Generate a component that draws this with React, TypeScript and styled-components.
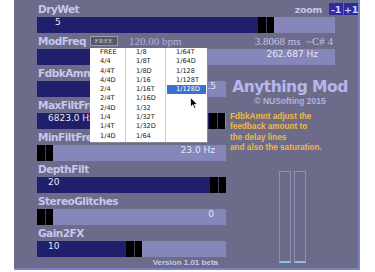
import styled, { createGlobalStyle } from 'styled-components';

const GlobalStyle = createGlobalStyle`
  html, body { margin: 0; padding: 0; background: #fff; }
  body { font-family: 'DejaVu Sans', Verdana, sans-serif; }
`;

const Panel = styled.div`
  position: relative;
  box-sizing: border-box;
  margin-left: 14px;
  width: 346px;
  height: 270px;
  padding: 1px 0 0 23px;
  background: #6c6b89;
  border-right: 2px solid #7b82cc;
  border-bottom: 2px solid #7b82cc;
  display: flex;
  flex-direction: column;
`;

const LabelLine = styled.div`
  height: 16px;
  display: flex;
  align-items: center;
`;

const Label = styled.span`
  font: bold 10.5px 'DejaVu Sans', Verdana, sans-serif;
  letter-spacing: -0.5px;
  color: #c6c6ee;
  padding-left: 1px;
`;

const ZoomBox = styled.div`
  margin-left: auto;
  display: flex;
  align-items: center;
  gap: 1px;
  font: bold 9.5px 'DejaVu Sans', sans-serif;
  letter-spacing: -0.3px;
  color: #c6c6ee;
`;

const ZoomButton = styled.span`
  display: inline-flex;
  align-items: center;
  justify-content: center;
  width: 14px;
  height: 12px;
  background: #2c2c9e;
  color: #d2d2ff;
  font-size: 9.5px;
  &:first-of-type { margin-left: 6px; }
`;

const FreeButton = styled.span`
  box-sizing: border-box;
  margin-left: 4px;
  width: 28px;
  height: 10px;
  display: inline-flex;
  align-items: center;
  justify-content: center;
  background: #575766;
  border: 1px solid #9a9aa8;
  font: 7px 'Liberation Serif', serif;
  letter-spacing: 0.3px;
  color: #c8c8d0;
`;

const Bpm = styled.span`
  margin-left: 11px;
  font: 11px 'Liberation Serif', serif;
  color: #b4b4dc;
`;

const NoteInfo = styled.span`
  margin-left: auto;
  padding-right: 25px;
  font: 11px 'Liberation Serif', serif;
  color: #c4c4ea;
  white-space: pre;
`;

const Track = styled.div<{ $w: number }>`
  position: relative;
  display: flex;
  width: ${(p) => p.$w}px;
  height: 16px;
  background: #8786ba;
`;

const Fill = styled.div`
  height: 100%;
  background: #1f1f6c;
`;

const Handle = styled.div`
  display: flex;
  gap: 1px;
  width: 16px;
  height: 100%;
  background: #44445a;
  span {
    flex: 1;
    background: #000;
  }
`;

const Value = styled.span<{ $right?: boolean; $inset: number }>`
  position: absolute;
  top: 0;
  ${(p) => (p.$right ? `right: ${p.$inset}px;` : `left: ${p.$inset}px;`)}
  line-height: 16px;
  font: 9px 'DejaVu Sans', sans-serif;
  color: #e6e6f6;
  white-space: nowrap;
`;

const Lower = styled.div`
  display: flex;
  flex: 1;
`;

const LeftCol = styled.div`
  width: 189px;
  display: flex;
  flex-direction: column;
`;

const Version = styled.div`
  text-align: right;
  padding: 1px 8px 0 0;
  font: bold 8px 'Liberation Sans', Arial, sans-serif;
  color: #c8c8e8;
`;

const RightCol = styled.div`
  flex: 1;
  margin-left: 4px;
  padding-top: 13px;
  display: flex;
  flex-direction: column;
`;

const TitleBlock = styled.div`
  width: 120px;
  text-align: center;
`;

const Title = styled.div`
  font: bold 15.5px 'DejaVu Sans', sans-serif;
  line-height: 18px;
  letter-spacing: -0.5px;
  color: #b6b6ee;
  white-space: nowrap;
`;

const Copyright = styled.div`
  font: bold 8.5px 'Liberation Sans', Arial, sans-serif;
  line-height: 11px;
  color: #b0b0e6;
`;

const Help = styled.div`
  margin-top: 5px;
  font: bold 8.2px 'Liberation Sans', Arial, sans-serif;
  line-height: 10.4px;
  color: #f0b848;
`;

const Meters = styled.div`
  margin: 17px 0 0 49px;
  display: flex;
  gap: 3px;
`;

const Meter = styled.div`
  box-sizing: border-box;
  width: 12px;
  height: 92px;
  border: 1px solid #8f8fb4;
  border-bottom: 2px solid #8cc0e4;
`;

const Menu = styled.div`
  position: absolute;
  left: 76px;
  top: 48px;
  width: 117px;
  height: 94px;
  background: #fff;
  display: grid;
  grid-template-columns: 36px 40px 41px;
  box-shadow: 1px 1px 0 #8a8a9a;
`;

const MenuCol = styled.div`
  border-right: 1px solid #cfcfcf;
  &:last-child {
    border-right: 0;
  }
`;

const MenuItem = styled.div<{ $active?: boolean }>`
  height: 9.3px;
  line-height: 9.3px;
  overflow: hidden;
  margin: 0 1px;
  padding-left: 9px;
  font: 6.6px 'DejaVu Sans', sans-serif;
  color: ${(p) => (p.$active ? '#fff' : '#1a1a1a')};
  background: ${(p) => (p.$active ? '#3a72d4' : 'transparent')};
`;

const Cursor = styled.svg`
  position: absolute;
  left: 176px;
  top: 97px;
`;

type Slider = {
  name: string;
  fill: number;
  value: string;
  right?: boolean;
  inset: number;
};

const lower: Slider[] = [
  { name: 'FdbkAmnt', fill: 70, value: '0.5', right: true, inset: 10 },
  { name: 'MaxFiltFreq', fill: 172, value: '6823.0 Hz', inset: 11 },
  { name: 'MinFiltFreq', fill: 0, value: '23.0 Hz', right: true, inset: 11 },
  { name: 'DepthFilt', fill: 173, value: '20', inset: 11 },
  { name: 'StereoGlitches', fill: 0, value: '0', right: true, inset: 12 },
  { name: 'Gain2FX', fill: 89, value: '10', inset: 11 },
];

const menuCols: string[][] = [
  ['FREE', '4/4', '4/4T', '4/4D', '2/4', '2/4T', '2/4D', '1/4', '1/4T', '1/4D'],
  ['1/8', '1/8T', '1/8D', '1/16', '1/16T', '1/16D', '1/32', '1/32T', '1/32D', '1/64'],
  ['1/64T', '1/64D', '1/128', '1/128T', '1/128D'],
];

const Bar = ({ s, width }: { s: Slider; width: number }) => (
  <Track $w={width}>
    <Fill style={{ width: s.fill }} />
    <Handle>
      <span />
      <span />
    </Handle>
    <Value $right={s.right} $inset={s.inset}>
      {s.value}
    </Value>
  </Track>
);

export default function App() {
  return (
    <>
      <GlobalStyle />
      <Panel>
        <LabelLine>
          <Label>DryWet</Label>
          <ZoomBox>
            zoom
            <ZoomButton>-1</ZoomButton>
            <ZoomButton>+1</ZoomButton>
          </ZoomBox>
        </LabelLine>
        <Bar s={{ name: 'DryWet', fill: 221, value: '5', inset: 18 }} width={298} />

        <LabelLine>
          <Label>ModFreq</Label>
          <FreeButton>FREE</FreeButton>
          <Bpm>120.00 bpm</Bpm>
          <NoteInfo>3.8068 ms  ~C# 4</NoteInfo>
        </LabelLine>
        <Bar
          s={{ name: 'ModFreq', fill: 140, value: '262.687 Hz', right: true, inset: 17 }}
          width={298}
        />

        <Lower>
          <LeftCol>
            {lower.map((s) => (
              <div key={s.name}>
                <LabelLine>
                  <Label>{s.name}</Label>
                </LabelLine>
                <Bar s={s} width={189} />
              </div>
            ))}
            <Version>Version 1.01 beta</Version>
          </LeftCol>
          <RightCol>
            <TitleBlock>
              <Title>Anything Mod</Title>
              <Copyright>© NUSofting 2015</Copyright>
            </TitleBlock>
            <Help>
              FdbkAmnt adjust the
              <br />
              feedback amount to
              <br />
              the delay lines
              <br />
              and also the saturation.
            </Help>
            <Meters>
              <Meter />
              <Meter />
            </Meters>
          </RightCol>
        </Lower>

        <Menu>
          {menuCols.map((col, ci) => (
            <MenuCol key={ci}>
              {col.map((item) => (
                <MenuItem key={item} $active={item === '1/128D'}>
                  {item}
                </MenuItem>
              ))}
            </MenuCol>
          ))}
        </Menu>
        <Cursor width="8" height="12" viewBox="0 0 8 12">
          <path d="M0.5 0.5 L0.5 10 L2.8 7.8 L4.4 11.4 L5.8 10.8 L4.3 7.3 L7.4 7.3 Z" fill="#000" stroke="#fff" strokeWidth="0.8" />
        </Cursor>
      </Panel>
    </>
  );
}
